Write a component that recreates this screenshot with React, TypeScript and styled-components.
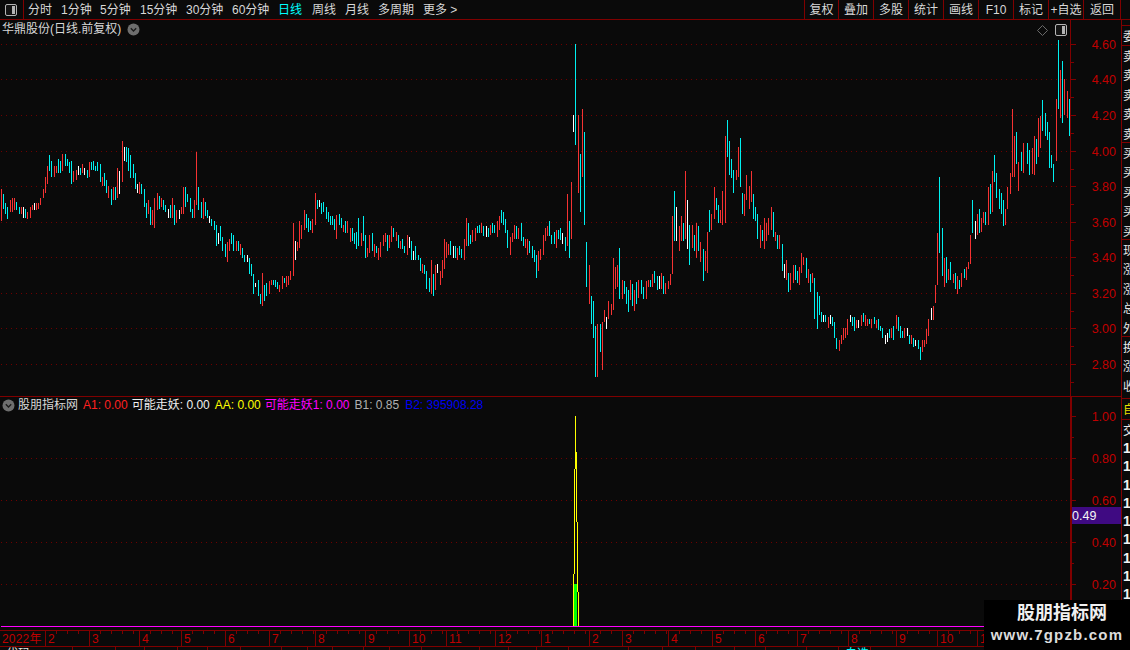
import React from "react";
import styled, { createGlobalStyle } from "styled-components";

const CJK = `"Liberation Sans", "Noto Sans CJK SC", sans-serif`;
const RED = "#800000";

const Global = createGlobalStyle`
  html, body { margin: 0; padding: 0; background: #0a0a0a; }
  * { box-sizing: border-box; }
`;

const SEGS: { ox: number; oy: number; s: number; d: string }[] = [
  { ox: 0, oy: 130, s: 3, d: "r3 177 273,c9 192 237,c15 219 252,c21 231 267,r30 210 246,r36 204 246,r42 204 240,c48 216 240,c57 231 252,r63 231 252,w69 231 264,c75 237 264,r81 246 267,r90 231 264,r96 225 240,w102 219 240,r108 219 240,r114 219 237,r120 204 225,r129 177 204,r135 141 189,r141 108 162,c147 75 123,c153 93 141,r162 108 141,r168 108 129,c174 87 129,c180 93 129,r186 72 123,c195 72 108,c201 87 108,c207 96 129,c213 93 162,r219 123 156,r228 120 150,w234 108 135,c240 114 135,r246 102 129,w252 114 135,c261 120 144,r267 96 141,c273 96 120,c279 93 120,c285 108 123,c291 96 123,c300 102 156,r306 141 168,c312 129 168,c318 150 189,r324 168 204,c333 177 225,r339 171 210,c345 171 210,r351 114 204,w357 123 192,r366 33 156,w372 51 93,c378 51 96,c384 54 123,c390 75 144,c399 102 144,c405 129 177,w411 162 189,r417 156 192,c423 162 192,c432 177 231,c438 219 264,r444 210 252,c450 231 285,r456 240 285,r462 204 294,r471 189 240,c477 198 237,r483 204 231,c489 210 240,c495 225 246,w504 237 264,c510 225 264,r516 204 264,c522 225 285,r528 240 279,w537 240 267,r543 231 252,r549 171 252,c555 171 231,c561 192 216,c570 204 246,c576 237 264,r582 210 264,r588 66 225,c594 171 240,c603 216 264,r609 204 267,c615 216 258,c621 240 264,w627 258 279,c633 267 288,c642 273 300,c648 285 348,w654 309 342,c660 288 333,c666 321 363,c675 342 381,r681 336 396,r687 327 363,c693 309 342,c699 315 363,r708 333 363,c714 333 363,r720 342 375,c726 354 384,c732 375 396,w741 375 396,c747 384 432,c753 402 438,c759 432 492,w765 459 471,c774 450 498,c780 492 522,r786 429 528,c793 465 513,c799 459 498,r808 453 492,r814 450 465,c820 450 465,c826 450 471,c832 456 477,r838 465 486,r847 438 477,c853 444 459,r859 438 471,r865 438 465,r871 423 450,r880 279 438,w886 333 390,r892 336 363,r898 273 354" },
  { ox: 300, oy: 190, s: 3, d: "r3 105 147,r12 60 120,c18 72 114,c24 84 126,c30 93 120,r37 87 129,r45 9 105,c52 30 57,w58 30 51,c64 39 72,c70 36 66,c79 51 87,c85 66 96,c91 78 105,c97 78 105,c103 87 120,r109 75 147,c118 72 105,c124 84 114,r130 105 126,c136 93 129,r142 93 129,r151 114 156,c157 114 153,c163 129 162,c169 126 177,c175 84 168,r184 129 168,c190 78 153,c196 135 204,r202 174 201,r208 135 189,c217 129 183,r223 162 201,c229 168 189,r235 174 210,r241 156 201,r250 135 168,r256 129 156,c262 135 183,r268 135 174,r274 108 156,c280 114 141,r289 126 153,c295 135 174,r301 153 177,c307 147 177,c313 168 189,r322 135 195,w328 141 174,c334 153 210,w340 183 210,c346 168 210,c355 195 210,c361 204 243,r367 222 249,c373 225 252,c379 243 297,c388 264 306,r394 210 312,c400 252 318,r406 225 300,w412 222 249,r421 243 285,r427 210 264,r433 147 237,r439 156 204,r445 162 195,c451 153 195,w460 168 204,c466 168 204,r472 174 210,c478 168 195,c484 177 204,r493 147 210,r499 84 168,c505 99 168,c511 135 162,r517 120 156,r526 114 153,c532 108 129,c538 105 129,r544 99 129,c550 108 138,w559 108 141,c565 114 141,r571 105 135,c577 99 129,c583 105 129,r592 93 141,r598 78 120,c604 60 99,c610 66 105,c616 87 129,c622 120 174,r631 141 195,r637 129 156,r643 105 147,c649 108 147,r655 114 147,c664 99 153,c670 141 168,r676 147 174,r682 147 195,c688 153 189,c697 168 204,c703 180 216,c709 195 264,r715 183 243,r721 177 210,r730 135 195,r736 114 153,r742 108 138,c748 93 138,c754 135 162,c763 126 162,r769 120 174,c775 120 147,c781 114 150,w787 129 162,c796 141 183" },
  { ox: 540, oy: 30, s: 3, d: "r81 492 648,c88 573 684,r94 456 627,w100 255 306,c106 42 345,r115 255 489,c121 372 546,r127 237 441,c133 306 585,c139 636 771,r148 705 822,c154 798 882,c160 813 924,c166 888 1041,r172 882 1041,c181 882 966,r187 876 1020,r193 840 876,w199 861 897,r205 813 867,r214 822 855,r220 684 840,r226 711 777,r232 705 771,c238 654 807,r247 750 807,c253 753 792,c259 771 822,c265 780 846" },
  { ox: 0, oy: 0, s: 1, d: "r630 280 300,c632 284 306,r634 290 311,c636 282 304,r638 280 298" },
  { ox: 640, oy: 110, s: 3, d: "c4 510 552,c10 531 567,r19 513 567,r25 510 531,c31 510 531,r37 492 531,c43 483 519,c52 498 540,w58 498 537,r64 489 537,c70 498 552,r76 519 552,r85 513 537,r91 492 525,r97 318 492,c103 243 393,w109 291 393,r118 348 423,r124 318 393,c130 339 393,r136 183 387,w142 270 417,c148 345 465,r157 345 414,c163 375 423,r169 339 444,c175 348 423,r181 396 456,c190 417 513,r196 423 483,r202 366 489,c208 300 366,r214 312 360,r223 231 327,c229 264 300,c235 285 339,r241 300 339,r247 243 345,r256 78 339,c262 30 141,c268 93 195,c274 147 204,c280 180 249,r289 180 210,r295 111 201,c301 84 231,c307 249 312,r313 252 318,r319 195 270,r328 228 297,r334 183 276,c340 252 327,c346 291 333,c352 312 387,r361 345 414,c367 360 393,r373 324 417,r379 339 393,r385 324 375,r394 291 360,c400 306 381,r406 366 393,c412 375 417,r418 375 417,c427 402 483,w433 462 504,r439 450 510,c445 489 546,r451 489 540,r460 465 519,c466 465 510,c472 483 519,r478 471 525,r484 429 489,r490 441 465,c499 444 504,r505 477 519,c511 492 546,r517 489 519,c523 504 627,c532 546 657,c538 558 615,c544 606 636,w550 615 636,c556 615 636,r565 621 654,w571 615 642,c577 621 648,c583 636 684,c589 684 717,r598 690 723,r604 675 702,r610 654 690,r616 654 684,r622 627 675,w631 615 636,c637 621 648,c643 621 663,r649 630 654,w655 630 654,r664 615 648,c670 609 636,r676 615 648,r682 627 648,c688 627 642,r694 627 654,c703 621 642,r709 630 654,c715 627 660,c721 648 663,c727 654 684,w736 675 702,w742 669 696,c748 657 684,r754 654 684,c760 648 690,r769 615 657,c775 621 663,c781 648 684,c787 663 684,r793 654 684,w802 654 678,c808 675 702,r814 675 702,c820 684 711,w826 690 708,c835 690 717,c841 711 750,r847 690 726,r853 690 711,r859 657 702,r865 627 678,w874 594 630,r880 588 630,r886 525 579,r892 369 525,c898 201 429,c907 354 498,r913 444 531,c919 441 519,r925 477 510,c931 456 510,r940 492 519,c946 489 537,r952 498 552,c958 510 537,r964 489 531,c973 477 504,r979 471 510,r985 456 477,r991 375 462,c997 270 369,w1006 333 387,r1012 312 375,c1018 297 369,r1024 324 366,r1030 306 339,c1036 306 345,r1045 231 345,c1051 222 312,r1057 183 306,c1063 135 216,c1069 189 264,c1078 237 297,c1084 249 312,c1090 270 348,r1096 297 345,r1102 231 297,r1111 189 252,r1123 78 201,c1129 66 162,r1135 156 243,c1144 126 183,r1150 99 189,c1162 99 162,c1168 120 195,r1177 114 192,r1183 78 195,c1189 87 162" },
  { ox: 0, oy: 0, s: 1, d: "r1012 109 177,r1038 118 157,r1040 116 148,c1042 100 131,c1045 113 136,c1047 122 140,c1049 132 168,c1051 155 168,c1053 164 182,r1056 99 161,c1058 40 109,r1060 70 118,c1062 61 123,r1064 79 115,r1067 91 118,c1069 99 136" },
];

function barPaths() {
  const p: Record<string, string> = { r: "", c: "", w: "" };
  for (const seg of SEGS) {
    for (const item of seg.d.split(",")) {
      const k = item[0];
      const [x, t, b] = item.slice(1).split(" ").map(Number);
      const px = Math.floor(seg.ox + x / seg.s) + 0.5;
      const y1 = Math.round(seg.oy + t / seg.s);
      const y2 = Math.round(seg.oy + b / seg.s);
      p[k] += `M${px} ${y1}V${y2}`;
    }
  }
  return p;
}
const BARS = barPaths();

const Page = styled.div`
  width: 1130px;
  height: 650px;
  position: relative;
  overflow: hidden;
  background: #0a0a0a;
  font-family: ${CJK};
  display: flex;
  flex-direction: column;
`;

const TopBar = styled.div`
  height: 20px;
  flex: none;
  display: flex;
  align-items: stretch;
  border-bottom: 1px solid ${RED};
  font-size: 12px;
  line-height: 20px;
  color: #d8d8d8;
`;
const IconCell = styled.div`
  width: 24px;
  flex: none;
  display: flex;
  align-items: center;
  justify-content: center;
  border-right: 1px solid ${RED};
  padding-right: 2px;
`;
const Nav = styled.nav`
  display: flex;
  flex: 1;
  padding-left: 4px;
`;
const NavItem = styled.span<{ $w: number; $on?: boolean }>`
  width: ${(p) => p.$w}px;
  flex: none;
  white-space: nowrap;
  color: ${(p) => (p.$on ? "#00ffff" : "#d8d8d8")};
`;
const Tools = styled.div`
  display: flex;
  margin-right: 9px;
  border-right: 1px solid ${RED};
`;
const Tool = styled.span<{ $w: number }>`
  width: ${(p) => p.$w}px;
  flex: none;
  text-align: center;
  white-space: nowrap;
  border-left: 1px solid ${RED};
`;

const Body = styled.div`
  flex: 1;
  display: flex;
  min-height: 0;
`;
const Main = styled.div`
  width: 1122px;
  flex: none;
  display: flex;
  flex-direction: column;
  border-right: 1px solid ${RED};
`;
const Panel = styled.section<{ $h: number }>`
  height: ${(p) => p.$h}px;
  flex: none;
  position: relative;
`;
const ChartSvg = styled.svg`
  display: block;
  width: 1121px;
  height: 100%;
  shape-rendering: crispEdges;
  text {
    font-family: "Liberation Sans", sans-serif;
    font-size: 12.5px;
    shape-rendering: auto;
  }
`;
const Divider = styled.div`
  height: 1px;
  flex: none;
  background: ${RED};
`;
const ChartTitle = styled.div`
  position: absolute;
  top: 3px;
  left: 2px;
  display: flex;
  align-items: center;
  gap: 6px;
  font-size: 12px;
  line-height: 13px;
  color: #d8d8d8;
  white-space: nowrap;
`;
const CornerIcons = styled.div`
  position: absolute;
  top: 4px;
  left: 1037px;
  display: flex;
  align-items: center;
  gap: 7px;
`;
const Legend = styled.div`
  position: absolute;
  top: 1px;
  left: 2px;
  display: flex;
  align-items: center;
  font-size: 12px;
  line-height: 14px;
  white-space: nowrap;
`;
const LegendName = styled.span`
  color: #d8d8d8;
  margin: 0 5px 0 3px;
`;
const LegendItem = styled.span<{ $c: string; $gap: number }>`
  color: ${(p) => p.$c};
  margin-right: ${(p) => p.$gap}px;
`;
const PinkLine = styled.div`
  height: 4px;
  flex: none;
  margin-left: 1px;
  border-top: 1px solid #ff00ff;
`;
const DateAxis = styled.div`
  height: 17px;
  flex: none;
  display: flex;
  border-top: 1px solid ${RED};
  border-bottom: 1px solid ${RED};
  color: #c00000;
  font-size: 12px;
  letter-spacing: 0.2px;
  line-height: 17px;
`;
const Month = styled.div<{ $w: number; $first?: boolean }>`
  width: ${(p) => p.$w}px;
  flex: none;
  padding-left: 2px;
  white-space: nowrap;
  border-right: 1px solid ${RED};
  background-image: repeating-linear-gradient(90deg, ${RED} 0 1px, transparent 1px 11px);
  background-size: 100% 3px;
  background-repeat: no-repeat;
  background-position: ${(p) => (p.$first ? "100px 0" : "10px 0")};
`;
const Status = styled.div`
  height: 3px;
  flex: none;
  display: flex;
  overflow: hidden;
  font-size: 12px;
  line-height: 14px;
  color: #e8e8e8;
`;
const StatusCell = styled.div<{ $w: number; $c?: string }>`
  width: ${(p) => p.$w}px;
  flex: none;
  border-right: 1px solid ${RED};
  padding-left: 6px;
  white-space: nowrap;
  color: ${(p) => p.$c || "#e8e8e8"};
`;

const Rail = styled.aside`
  flex: 1;
  min-width: 0;
  overflow: hidden;
  padding-top: 5px;
  display: flex;
  flex-direction: column;
`;
const RailCell = styled.div<{ $h: number; $c?: string }>`
  height: ${(p) => p.$h}px;
  flex: none;
  border-top: 1px solid ${RED};
  padding: 2px 0 0 1px;
  font-size: 12px;
  line-height: 19.4px;
  color: ${(p) => p.$c || "#e8e8e8"};
  white-space: pre-line;
  overflow: hidden;
`;
const RailDigits = styled.div`
  font: bold 14px/18.3px "Liberation Sans", sans-serif;
  color: #f2f2f2;
  padding: 1px 0 0 1px;
  white-space: pre-line;
`;

const Watermark = styled.div`
  position: absolute;
  left: 984px;
  top: 600px;
  width: 146px;
  height: 50px;
  background: #000;
  color: #f0f0f0;
  display: flex;
  flex-direction: column;
  align-items: center;
  padding-top: 2px;
`;
const MarkTitle = styled.div`
  font: bold 18px/22px ${CJK};
  margin-left: 10px;
`;
const MarkUrl = styled.div`
  font: bold 15px/17px "Liberation Sans", sans-serif;
  letter-spacing: 1.2px;
  color: #dcdcdc;
  margin-top: 2px;
`;

const Chevron = () => (
  <svg width="13" height="13" viewBox="0 0 13 13">
    <circle cx="6.5" cy="6.5" r="6" fill="#6e6e6e" />
    <path d="M3.8 5.2 6.5 8l2.7-2.8" fill="none" stroke="#1a1a1a" strokeWidth="1.3" />
  </svg>
);
const PanelIcon = () => (
  <svg width="12" height="12" viewBox="0 0 12 12">
    <rect x="0.5" y="0.5" width="11" height="11" rx="1.5" fill="#141414" stroke="#b4b4b4" />
    <rect x="7" y="2" width="3" height="8" fill="#b4b4b4" />
  </svg>
);
const Diamond = () => (
  <svg width="11" height="11" viewBox="0 0 11 11">
    <path d="M5.5.5 10.5 5.5 5.5 10.5.5 5.5Z" fill="none" stroke="#6a6a6a" />
  </svg>
);

const Dotted = ({ y }: { y: number }) => (
  <line x1="1" x2="1070" y1={y + 0.5} y2={y + 0.5} stroke="#6e0000" strokeDasharray="1 4" />
);

const PRICE = [
  ["4.60", 44], ["4.40", 79], ["4.20", 115], ["4.00", 151], ["3.80", 186],
  ["3.60", 222], ["3.40", 257], ["3.20", 293], ["3.00", 328], ["2.80", 364],
] as [string, number][];
const IND = [
  ["1.00", 416], ["0.80", 458], ["0.60", 500], ["0.40", 542], ["0.20", 584],
] as [string, number][];

const Axis = ({ items, top, bottom, w }: { items: [string, number][]; top: number; bottom: number; w: number }) => {
  const step = (items[1][1] - items[0][1]) / 2;
  return (
    <g>
      <rect x="1070" y={top} width={w} height={bottom - top} fill={RED} />
      {items.map(([label, y]) => (
        <g key={label}>
          <rect x="1071" y={y} width="5" height="1" fill={RED} />
          <rect x="1071" y={Math.round(y + step)} width="3" height="1" fill={RED} />
          <text x="1116" y={y + 5} textAnchor="end" fill="#c00000">{label}</text>
        </g>
      ))}
    </g>
  );
};

const NAV: [string, number, boolean?][] = [
  ["分时", 33], ["1分钟", 39], ["5分钟", 40], ["15分钟", 46], ["30分钟", 46], ["60分钟", 46],
  ["日线", 34, true], ["周线", 33], ["月线", 33], ["多周期", 45], ["更多 >", 40],
];
const TOOLS: [string, number][] = [
  ["复权", 34], ["叠加", 35], ["多股", 35], ["统计", 35], ["画线", 35], ["F10", 35], ["标记", 35], ["+自选", 35], ["返回", 37],
];
const MONTHS: [string, number][] = [
  ["2022年", 46], ["2", 44], ["3", 50], ["4", 42], ["5", 44], ["6", 44], ["7", 46], ["8", 50], ["9", 44], ["10", 37], ["11", 49], ["12", 46],
  ["1", 48], ["2", 33], ["3", 46], ["4", 44], ["5", 43], ["6", 42], ["7", 51], ["8", 48], ["9", 41], ["10", 40], ["11", 60], ["", 68],
];
const CELLS: [string, number, string?][] = [
  ["代码", 73], ["", 43], ["", 29], ["", 33], ["", 30], ["", 33], ["", 41], ["", 26], ["", 25], ["", 31], ["", 26], ["", 32],
  ["", 58], ["", 29], ["", 28], ["", 32], ["", 60], ["", 34], ["", 33], ["", 39], ["", 31], ["", 41], ["", 32, undefined], ["自选", 32, "#00ffff"],
];

export default function App() {
  return (
    <Page>
      <Global />
      <TopBar>
        <IconCell><PanelIcon /></IconCell>
        <Nav>
          {NAV.map(([t, w, on]) => <NavItem key={t} $w={w} $on={on}>{t}</NavItem>)}
        </Nav>
        <Tools>
          {TOOLS.map(([t, w]) => <Tool key={t} $w={w}>{t}</Tool>)}
        </Tools>
      </TopBar>
      <Body>
        <Main>
          <Panel $h={376}>
            <ChartSvg viewBox="0 20 1121 376">
              {PRICE.map(([l, y]) => <Dotted key={l} y={y} />)}
              <Axis items={PRICE} top={20} bottom={396} w={1} />
              <path d={BARS.r} stroke="#f53232" fill="none" />
              <path d={BARS.c} stroke="#00f0f0" fill="none" />
              <path d={BARS.w} stroke="#ffffff" fill="none" />
            </ChartSvg>
            <ChartTitle>华鼎股份(日线.前复权)<Chevron /></ChartTitle>
            <CornerIcons><Diamond /><PanelIcon /></CornerIcons>
          </Panel>
          <Divider />
          <Panel $h={229}>
            <ChartSvg viewBox="0 397 1121 229">
              {IND.slice(1).map(([l, y]) => <Dotted key={l} y={y} />)}
              <Axis items={IND} top={397} bottom={626} w={2} />
              <rect x="574" y="584" width="3" height="42" fill="#00ff00" />
              <path
                d="M575.5 416V452M575 452H577M575.5 452V469M576.5 452V469M574.5 469V574M576.5 469V522M577.5 522V592M573.5 574V626M578.5 592V626"
                stroke="#ffff00"
                fill="none"
              />
              <rect x="1072" y="507" width="49" height="17" fill="#3f0a82" />
              <text x="1072" y="520" fill="#f4f4f4">0.49</text>
            </ChartSvg>
            <Legend>
              <Chevron />
              <LegendName>股朋指标网</LegendName>
              <LegendItem $c="#ff2020" $gap={4}>A1: 0.00</LegendItem>
              <LegendItem $c="#f0f0f0" $gap={5}>可能走妖: 0.00</LegendItem>
              <LegendItem $c="#ffff00" $gap={4}>AA: 0.00</LegendItem>
              <LegendItem $c="#ff00ff" $gap={5}>可能走妖1: 0.00</LegendItem>
              <LegendItem $c="#b0b0b0" $gap={6}>B1: 0.85</LegendItem>
              <LegendItem $c="#0000f0" $gap={0}>B2: 395908.28</LegendItem>
            </Legend>
          </Panel>
          <PinkLine />
          <DateAxis>
            {MONTHS.map(([t, w], i) => <Month key={i} $w={w} $first={i === 0}>{t}</Month>)}
          </DateAxis>
          <Status>
            {CELLS.map(([t, w, c], i) => <StatusCell key={i} $w={w} $c={c}>{t}</StatusCell>)}
          </Status>
        </Main>
        <Rail>
          <RailCell $h={20}>委</RailCell>
          <RailCell $h={97}>{"卖\n卖\n卖\n卖\n卖"}</RailCell>
          <RailCell $h={97}>{"买\n买\n买\n买\n买"}</RailCell>
          <RailCell $h={97}>{"现\n涨\n涨\n总\n外"}</RailCell>
          <RailCell $h={62}>{"换\n涨\n收"}</RailCell>
          <RailCell $h={21} $c="#e8e000">自</RailCell>
          <RailCell $h={19}>交</RailCell>
          <RailDigits>{"1\n1\n1\n1\n1\n1\n1\n1\n1"}</RailDigits>
        </Rail>
      </Body>
      <Watermark>
        <MarkTitle>股朋指标网</MarkTitle>
        <MarkUrl>www.7gpzb.com</MarkUrl>
      </Watermark>
    </Page>
  );
}
